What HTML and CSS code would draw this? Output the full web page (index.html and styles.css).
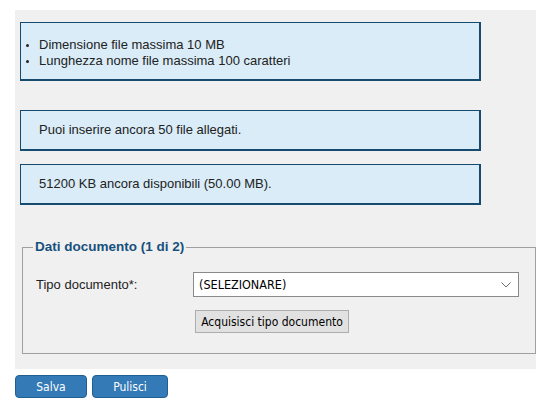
FILE: index.html
```html
<!DOCTYPE html>
<html lang="it">
<head>
  <meta charset="UTF-8">
  <meta name="viewport" content="width=device-width, initial-scale=1.0">
  <title>Allegati</title>
  <link rel="stylesheet" href="styles.css">
</head>
<body>
  <div class="page">
    <div class="panel">
      <div class="info">
        <ul class="info-list">
          <li>Dimensione file massima 10 MB</li>
          <li>Lunghezza nome file massima 100 caratteri</li>
        </ul>
      </div>
      <div class="info info-gap">Puoi inserire ancora 50 file allegati.</div>
      <div class="info">51200 KB ancora disponibili (50.00 MB).</div>

      <fieldset class="doc-fields">
        <legend>Dati documento (1 di 2)</legend>
        <div class="form-row">
          <label for="tipo-doc">Tipo documento*:</label>
          <div class="select-wrap">
            <select id="tipo-doc">
              <option>(SELEZIONARE)</option>
            </select>
            <svg class="select-arrow" width="10" height="6" viewBox="0 0 10 6">
              <path d="M0.5 0.5 L5 5 L9.5 0.5" fill="none" stroke="#6d6d6d" stroke-width="1"/>
            </svg>
          </div>
        </div>
        <div class="form-row">
          <span></span>
          <button class="btn-plain" type="button">Acquisisci tipo documento</button>
        </div>
      </fieldset>
    </div>

    <div class="actions">
      <button class="btn-blue btn-save" type="button">Salva</button>
      <button class="btn-blue btn-clear" type="button">Pulisci</button>
    </div>
  </div>
</body>
</html>
```

FILE: styles.css
```css
body {
  margin: 0;
  font-family: "Liberation Sans", Arial, sans-serif;
  font-size: 13px;
  color: #222;
  background-color: #fff;
}
.page {
  padding: 10px 0 0 15px;
}
.panel {
  width: 521px;
  box-sizing: border-box;
  padding: 12px 0 15px 5px;
  background-color: #f0f0f0;
}
.info {
  width: 461px;
  box-sizing: border-box;
  padding: 12px 18px 12px 18px;
  margin-bottom: 13px;
  background-color: #d9ecf7;
  border: 1px solid #164a6e;
  border-width: 1px 2px 2px 1px;
  line-height: 14px;
}
.info-gap {
  margin-top: 29px;
}
.info-list {
  margin: 2px 0 -2px 0;
  padding-left: 0;
  list-style: disc outside;
  line-height: 16px;
}
.info-list li::marker {
  font-size: 10px;
}
.doc-fields {
  margin: 34px 0 0 2px;
  padding: 17px 0 20px 13px;
  border: 1px solid #a0a0a0;
}
.doc-fields legend {
  padding: 0 2px;
  margin-left: -3px;
  font-size: 13.5px;
  line-height: 16px;
  font-weight: bold;
  color: #17507e;
}
.form-row {
  display: grid;
  grid-template-columns: 157px auto;
  align-items: center;
  margin-bottom: 13px;
}
.form-row:last-child {
  margin-bottom: 0;
}
.form-row label {
  font-size: 13px;
}
.select-wrap {
  position: relative;
  width: 326px;
}
.select-wrap select {
  appearance: none;
  width: 100%;
  height: 25px;
  padding: 0 5px;
  font-family: "DejaVu Sans Condensed", "Liberation Sans", sans-serif;
  font-size: 12.5px;
  color: #000;
  background-color: #fff;
  border: 1px solid #8a8a8a;
  border-radius: 0;
}
.select-arrow {
  position: absolute;
  right: 8px;
  top: 10px;
  pointer-events: none;
}
.btn-plain {
  justify-self: start;
  margin-left: 2px;
  width: 154px;
  height: 23px;
  padding: 0;
  font-family: "DejaVu Sans Condensed", "Liberation Sans", sans-serif;
  font-size: 12px;
  color: #000;
  background-color: #e1e1e1;
  border: 1px solid #adadad;
}
.actions {
  display: flex;
  gap: 5px;
  margin-top: 6px;
}
.btn-blue {
  height: 23px;
  padding: 0;
  font-family: "DejaVu Sans Condensed", "Liberation Sans", sans-serif;
  font-size: 12px;
  color: #fff;
  background-color: #337ab7;
  border: 1px solid #215f91;
  border-radius: 4px;
}
.btn-save {
  width: 72px;
}
.btn-clear {
  width: 76px;
}
```
